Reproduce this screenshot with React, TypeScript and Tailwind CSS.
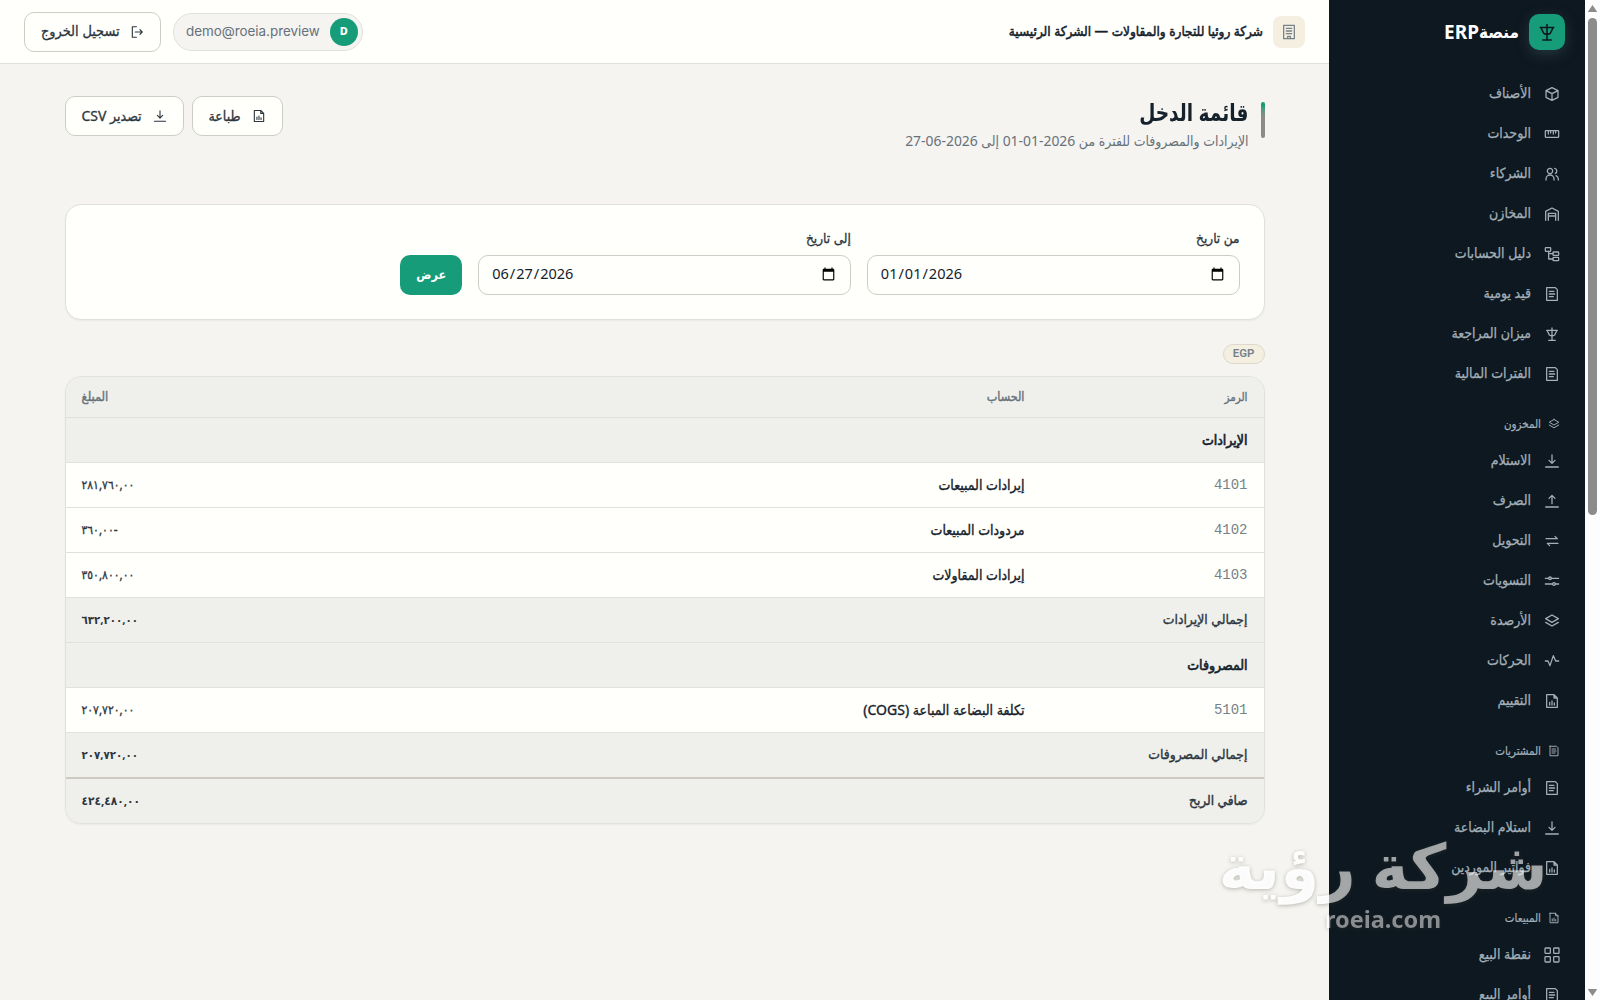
import type { ReactNode } from "react";
import { clsx } from "clsx";

const ICONS: Record<string, ReactNode> = {
  scale: <path d="M12 3v18M7 21.500h10M4 6.500h16M4.500 6.500l3.500 7q4 2.500 8 0l3.500-7" />,
  box: <path d="M12 2.500l9 4.500v10l-9 4.500L3 17V7l9-4.500zM3 7l9 4.500L21 7M12 11.500v10" />,
  ruler: <path d="M3 7h18a1 1 0 0 1 1 1v8a1 1 0 0 1-1 1H3a1 1 0 0 1-1-1V8a1 1 0 0 1 1-1zM6.500 7v5M10 7v3.500M14 7v5M17.500 7v3.500" />,
  users: (
    <>
      <circle cx="9" cy="7.500" r="4" />
      <path d="M3 21v-1.500a6 6 0 0 1 12 0V21M16 3.500a4 4 0 0 1 1 7.500M18 14.500a6 6 0 0 1 3.500 5V21" />
    </>
  ),
  warehouse: <path d="M2.500 21.500V8L12 3l9.500 5v13.500M6.500 21.500V11h11v10.500M6.500 15h11" />,
  tree: (
    <>
      <rect x="2" y="2.500" width="8" height="5.500" rx="1" />
      <rect x="13.500" y="9" width="8.500" height="5" rx="1" />
      <rect x="13.500" y="17" width="8.500" height="5" rx="1" />
      <path d="M7 8v11.500h6.500M7 11.500h6.500" />
    </>
  ),
  doc: <path d="M4 2.500h13l3 3v16H4v-19zM8 8h7M8 12h8M8 16h6" />,
  layers: <path d="M12 3l9.500 5.500L12 14 2.500 8.500 12 3zM2.500 14l9.500 5.500 9.500-5.500" />,
  download: <path d="M12 3v12M7.500 11l4.500 4.500 4.500-4.500M2.500 21h19" />,
  upload: <path d="M12 16V3.500M7.500 8L12 3.500 16.500 8M2.500 21h19" />,
  transfer: <path d="M3 8.500h17l-3.500-3.500M21 15.500H5l3.500 3.500" />,
  sliders: (
    <>
      <path d="M2 8h5M11 8h11M2 16.500h11M17 16.500h5" />
      <circle cx="9" cy="8" r="2" />
      <circle cx="15" cy="16.500" r="2" />
    </>
  ),
  pulse: <path d="M2 12h4l3 7 5-15 3.500 8H22" />,
  report: <path d="M4 2.500h11l5 5v14H4v-19zM15 2.500v5h5M8.500 18v-4M12 18v-6M15.500 18v-3" />,
  grid: (
    <>
      <rect x="1.500" y="1.500" width="8" height="8" rx="1" />
      <rect x="14.500" y="1.500" width="8" height="8" rx="1" />
      <rect x="1.500" y="14.500" width="8" height="8" rx="1" />
      <rect x="14.500" y="14.500" width="8" height="8" rx="1" />
    </>
  ),
  building: <path d="M4 2h16v20H4V2zM8 6.500h8M8 10.500h8M8 14.500h8M10 22v-3.500h4V22" />,
  logout: <path d="M11 3H4v18h7M9 12h12M17 8l4 4-4 4" />,
};

function Icon({ name, className }: { name: string; className?: string }) {
  return (
    <svg
      viewBox="0 0 24 24"
      fill="none"
      stroke="currentColor"
      strokeWidth={1.9}
      strokeLinecap="round"
      strokeLinejoin="round"
      className={clsx("shrink-0", className)}
    >
      {ICONS[name]}
    </svg>
  );
}

const NAV = [
  {
    items: [
      ["box", "الأصناف"],
      ["ruler", "الوحدات"],
      ["users", "الشركاء"],
      ["warehouse", "المخازن"],
      ["tree", "دليل الحسابات"],
      ["doc", "قيد يومية"],
      ["scale", "ميزان المراجعة"],
      ["doc", "الفترات المالية"],
    ],
  },
  {
    title: "المخزون",
    icon: "layers",
    items: [
      ["download", "الاستلام"],
      ["upload", "الصرف"],
      ["transfer", "التحويل"],
      ["sliders", "التسويات"],
      ["layers", "الأرصدة"],
      ["pulse", "الحركات"],
      ["report", "التقييم"],
    ],
  },
  {
    title: "المشتريات",
    icon: "doc",
    items: [
      ["doc", "أوامر الشراء"],
      ["download", "استلام البضاعة"],
      ["report", "فواتير الموردين"],
    ],
  },
  {
    title: "المبيعات",
    icon: "report",
    items: [
      ["grid", "نقطة البيع"],
      ["doc", "أوامر البيع"],
    ],
  },
];

type Row =
  | { kind: "section"; label: string }
  | { kind: "line"; code: string; label: string; amount: string }
  | { kind: "total" | "net"; label: string; amount: string };

const ROWS: Row[] = [
  { kind: "section", label: "الإيرادات" },
  { kind: "line", code: "4101", label: "إيرادات المبيعات", amount: "٢٨١,٧٦٠,٠٠" },
  { kind: "line", code: "4102", label: "مردودات المبيعات", amount: "٣٦٠,٠٠-" },
  { kind: "line", code: "4103", label: "إيرادات المقاولات", amount: "٣٥٠,٨٠٠,٠٠" },
  { kind: "total", label: "إجمالي الإيرادات", amount: "٦٣٢,٢٠٠,٠٠" },
  { kind: "section", label: "المصروفات" },
  { kind: "line", code: "5101", label: "تكلفة البضاعة المباعة (COGS)", amount: "٢٠٧,٧٢٠,٠٠" },
  { kind: "total", label: "إجمالي المصروفات", amount: "٢٠٧,٧٢٠,٠٠" },
  { kind: "net", label: "صافي الربح", amount: "٤٢٤,٤٨٠,٠٠" },
];

function Scrollbar() {
  return (
    <div className="flex w-[15px] shrink-0 flex-col items-center justify-between bg-[#fdfdfd] pt-[5px] pb-[4px] text-[#8b8b8b]">
      <div className="flex flex-col items-center gap-[6px]">
        <svg viewBox="0 0 9 7" className="h-[7px] w-[9px]" fill="currentColor">
          <path d="M4.500 0L9 6.500a.5.5 0 0 1-.5.5h-8a.5.5 0 0 1-.5-.5z" />
        </svg>
        <div className="h-[497px] w-[9px] rounded-full bg-[#8b8b8b]" />
      </div>
      <svg viewBox="0 0 9 7" className="h-[7px] w-[9px]" fill="currentColor">
        <path d="M4.500 7L9 .5a.5.5 0 0 0-.5-.5h-8a.5.5 0 0 0-.5.5z" />
      </svg>
    </div>
  );
}

function Sidebar() {
  return (
    <aside className="w-64 shrink-0 overflow-hidden bg-[#0e1820] text-[#a3b0b8]">
      <div className="flex h-16 items-center gap-2.5 px-5">
        <div className="flex size-9 items-center justify-center rounded-[10px] bg-[#179c7a] text-[#0e1820] shadow-[0_4px_14px_rgba(80,110,120,0.35)]">
          <Icon name="scale" className="size-5" />
        </div>
        <div className="flex items-center text-white">
          <span className="text-[17px] font-bold">منصة</span>
          <span className="text-[19px] font-bold">ERP</span>
        </div>
      </div>
      <nav className="pt-[10px]">
        {NAV.map((group, i) => (
          <div key={i}>
            {group.title && (
              <div className="flex h-[47px] items-center gap-[7px] pt-3 pr-[25px]">
                <Icon name={group.icon!} className="size-3" />
                <span className="text-[11.5px] [-webkit-text-stroke:0.2px]">{group.title}</span>
              </div>
            )}
            {group.items.map(([icon, label]) => (
              <a key={label} href="#" className="flex h-10 items-center gap-[13px] pr-[25px]">
                <Icon name={icon} className="size-4" />
                <span className="pb-[3px] text-[14px] [-webkit-text-stroke:0.25px]">{label}</span>
              </a>
            ))}
          </div>
        ))}
      </nav>
    </aside>
  );
}

function OutlineButton({ icon, children }: { icon: string; children: ReactNode }) {
  return (
    <button className="flex h-10 items-center gap-[11px] rounded-[10px] border border-[#cdcdc6] bg-[#fffffb] px-4 text-[14px] text-[#2b3640] [-webkit-text-stroke:0.3px]">
      <Icon name={icon} className="size-[14px]" />
      <span className="pb-0.5">{children}</span>
    </button>
  );
}

function Topbar() {
  return (
    <header className="flex h-16 shrink-0 items-center justify-between border-b border-[#e0e0dc] bg-[#fffffb] px-6">
      <div className="flex items-center gap-[10px]">
        <div className="flex size-8 items-center justify-center rounded-lg bg-[#f5efe1] text-[#76828a]">
          <Icon name="building" className="size-4" />
        </div>
        <span className="text-[13.5px] text-[#15212b] [-webkit-text-stroke:0.5px]">شركة روئيا للتجارة والمقاولات — الشركة الرئيسية</span>
      </div>
      <div className="flex items-center gap-3">
        <div className="flex h-[38px] items-center gap-2.5 rounded-full border border-[#e0e0dc] bg-[#f5f4f1] pr-1 pl-3">
          <span className="flex size-7 items-center justify-center rounded-full bg-[#179c7a] text-[11px] font-extrabold text-white">D</span>
          <span className="font-['Inter'] text-[13.4px] text-[#66717a]">demo@roeia.preview</span>
        </div>
        <button className="flex h-10 w-[137px] items-center justify-between rounded-[10px] border border-[#cdcdc6] bg-[#fffffb] px-4 text-[14.4px] text-[#2b3640] [-webkit-text-stroke:0.3px]">
          <Icon name="logout" className="size-[14px]" />
          <span className="pb-0.5">تسجيل الخروج</span>
        </button>
      </div>
    </header>
  );
}

function DateField({ label, value }: { label: string; value: string }) {
  return (
    <label className="flex flex-col gap-[7px]">
      <span className="h-[19px] text-[13.5px] leading-[19px] text-[#2b3640] [-webkit-text-stroke:0.3px]">{label}</span>
      <input
        type="date"
        dir="ltr"
        defaultValue={value}
        className="h-10 rounded-[10px] border border-[#cdcdc6] bg-[#fffffb] px-3 pb-0.5 font-['Noto_Sans'] text-[14.5px] text-[#15212b]"
      />
    </label>
  );
}

function StatementRow({ row }: { row: Row }) {
  if (row.kind === "line") {
    return (
      <div className="flex h-[45px] items-center border-b border-[#e0e0dc] bg-[#fffffb] px-4 text-[14px] text-[#15212b]">
        <span className="w-[223px] font-['Liberation_Mono'] text-[14px] text-[#76828a]">{row.code}</span>
        <span className="flex-1 pb-0.5 [-webkit-text-stroke:0.35px]">{row.label}</span>
        <span dir="ltr" className="text-[12px] text-[#2b3640] [-webkit-text-stroke:0.3px]">{row.amount}</span>
      </div>
    );
  }
  return (
    <div
      className={clsx(
        "flex items-center justify-between bg-[#efefeb] px-4 text-[14px]",
        row.kind === "section" && "h-[45px] border-b border-[#e0e0dc] text-[#15212b] [-webkit-text-stroke:0.6px]",
        row.kind === "total" && "h-[45px] border-b border-[#e0e0dc] text-[#2b3640] [-webkit-text-stroke:0.35px] nth-last-2:h-[44px] nth-last-2:border-0",
        row.kind === "net" && "h-[46px] border-t-2 border-[#cdcabf] text-[#2b3640] [-webkit-text-stroke:0.4px]"
      )}
    >
      <span className={clsx("pb-0.5", row.kind === "net" ? "text-[13.5px]" : row.kind === "total" && "text-[13.8px]")}>
        {row.label}
      </span>
      {row.kind !== "section" && (
        <span dir="ltr" className={clsx("pb-px font-bold [-webkit-text-stroke:0]", row.kind === "net" ? "text-[11.8px]" : "text-[11.4px]")}>
          {row.amount}
        </span>
      )}
    </div>
  );
}

export default function App() {
  return (
    <div
      dir="rtl"
      lang="ar"
      className="relative flex h-[1000px] w-[1600px] overflow-hidden bg-[#f5f4f1] font-['Noto_Sans','DejaVu_Sans_Condensed','DejaVu_Sans',sans-serif]"
    >
      <Scrollbar />
      <Sidebar />
      <div className="flex min-w-0 flex-1 flex-col">
        <Topbar />
        <main className="mx-auto w-[1200px] pt-8">
          <div className="flex items-start justify-between">
            <div className="flex gap-3">
              <span className="mt-[6px] h-9 w-1 rounded-full bg-linear-to-b from-[#179c7a] from-10% to-[#8b8b8b] to-40%" />
              <div>
                <h1 className="h-8 origin-right scale-x-[0.86] text-[24px] leading-8 font-bold text-[#15212b]">قائمة الدخل</h1>
                <p className="mt-[3px] h-[21px] text-[13.9px] leading-5 text-[#66717a]">الإيرادات والمصروفات للفترة من 2026-01-01 إلى 2026-06-27</p>
              </div>
            </div>
            <div className="flex gap-2">
              <OutlineButton icon="report">طباعة</OutlineButton>
              <OutlineButton icon="download">تصدير CSV</OutlineButton>
            </div>
          </div>

          <section className="mt-[52px] grid grid-cols-3 items-end gap-4 rounded-2xl border border-[#e0e0dc] bg-[#fffffb] p-6 shadow-xs">
            <DateField label="من تاريخ" value="2026-01-01" />
            <DateField label="إلى تاريخ" value="2026-06-27" />
            <div>
              <button className="flex h-10 items-center rounded-[10px] bg-[#179c7a] px-4 text-[12.5px] font-bold text-white">عرض</button>
            </div>
          </section>

          <div className="mt-6 flex">
            <span className="flex h-5 items-center rounded-full border border-[#dcd9cc] bg-[#f5efe1] px-[9px] font-['Roboto'] text-[11.5px] font-semibold text-[#76828a]">EGP</span>
          </div>

          <section className="mt-3 overflow-hidden rounded-2xl border border-[#e0e0dc] shadow-xs">
            <div className="flex h-[41px] items-center border-b border-[#e0e0dc] bg-[#efefeb] px-4 text-[12px] text-[#66717a] [-webkit-text-stroke:0.35px]">
              <span className="w-[223px] text-[11.5px]">الرمز</span>
              <span className="flex-1 text-[12.5px]">الحساب</span>
              <span className="text-[12.8px]">المبلغ</span>
            </div>
            {ROWS.map((row, i) => (
              <StatementRow key={i} row={row} />
            ))}
          </section>
        </main>
      </div>

      {/* Brand watermark over the page corner, more opaque over the light content area */}
      <div className="pointer-events-none absolute top-[824px] left-[1216px] flex w-[334px] flex-col text-center text-transparent drop-shadow-[0_1px_2px_rgba(80,80,60,0.4)]">
        <span className="bg-linear-to-r from-white/95 from-[113px] to-white/60 to-[113px] bg-clip-text font-['DejaVu_Sans'] text-[63px] leading-[88px] font-bold whitespace-nowrap [word-spacing:-6px]">
          شركة رؤية
        </span>
        <span className="-mt-[7px] bg-linear-to-r from-white/95 from-[113px] to-white/50 to-[113px] bg-clip-text font-['Noto_Sans'] text-[23.5px] leading-7 font-bold">
          roeia.com
        </span>
      </div>
    </div>
  );
}
